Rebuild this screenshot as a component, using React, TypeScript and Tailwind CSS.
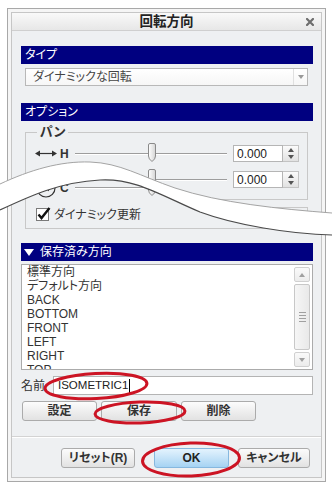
import React from 'react';

const bodyBg = 'bg-[#eef0f2]';

function Header({ children }: { children: React.ReactNode }) {
  return (
    <div className="flex h-[18px] items-center bg-[#000080] pl-[4px] text-[12px] leading-none text-white">
      {children}
    </div>
  );
}

function SpinInput() {
  return (
    <div className="flex h-[17px]">
      <div className="flex w-[50px] items-center border border-[#b5b5b5] bg-white pl-[3px] text-[12px] leading-none text-[#222]">
        0.000
      </div>
      <div className="flex w-[16px] flex-col border border-l-0 border-[#c3c3c3] bg-gradient-to-b from-[#fbfbfb] to-[#e2e2e2]">
        <div className="flex flex-1 items-center justify-center">
          <svg width="6" height="4" viewBox="0 0 6 4">
            <path d="M0 4 L3 0 L6 4 Z" fill="#555" />
          </svg>
        </div>
        <div className="flex flex-1 items-center justify-center">
          <svg width="6" height="4" viewBox="0 0 6 4">
            <path d="M0 0 L6 0 L3 4 Z" fill="#555" />
          </svg>
        </div>
      </div>
    </div>
  );
}

function Slider() {
  return (
    <div className="relative flex h-[17px] w-[152px] items-center">
      <div className="h-[2px] w-full border-t border-[#9d9d9d] bg-white" />
      <svg className="absolute left-[72px] top-[-2px]" width="10" height="19" viewBox="0 0 10 19">
        <defs>
          <linearGradient id="thumb" x1="0" y1="0" x2="1" y2="0">
            <stop offset="0" stopColor="#ffffff" />
            <stop offset="1" stopColor="#d4d4d4" />
          </linearGradient>
        </defs>
        <path d="M1.5 2 Q1.5 0.5 3 0.5 H7 Q8.5 0.5 8.5 2 V13 Q8.5 16 5 18.5 Q1.5 16 1.5 13 Z" fill="url(#thumb)" stroke="#8a8a8a" />
      </svg>
    </div>
  );
}

function AxisRow({ icon, axis }: { icon: React.ReactNode; axis: string }) {
  return (
    <div className="flex h-[17px] items-center pl-[9px]">
      <div className="flex w-[22px] items-center justify-center">{icon}</div>
      <span className="ml-[3px] w-[12px] text-[12px] font-bold leading-none text-[#333]">{axis}</span>
      <div className="ml-[3px]">
        <Slider />
      </div>
      <div className="ml-[6px]">
        <SpinInput />
      </div>
    </div>
  );
}

const hArrow = (
  <svg width="22" height="9" viewBox="0 0 22 9">
    <path d="M3 4.5 H19" stroke="#333" strokeWidth="1.2" />
    <path d="M0 4.5 L5 1.5 L5 7.5 Z M22 4.5 L17 1.5 L17 7.5 Z" fill="#333" />
  </svg>
);

const vArrow = (
  <svg width="9" height="17" viewBox="0 0 9 17">
    <path d="M4.5 3 V14" stroke="#333" strokeWidth="1.2" />
    <path d="M4.5 0 L1.5 4 L7.5 4 Z M4.5 17 L1.5 13 L7.5 13 Z" fill="#333" />
  </svg>
);

const circleIcon = (
  <svg width="22" height="22" viewBox="0 0 22 22">
    <ellipse cx="11" cy="11" rx="9" ry="9" fill="none" stroke="#333" strokeWidth="1.2" />
    <path d="M8 9 L14 14 M14 9 L8 14" stroke="#333" strokeWidth="1" />
  </svg>
);

function Btn({ label, w, blue }: { label: string; w: string; blue?: boolean }) {
  return (
    <div
      className={
        blue
          ? `flex h-[20px] items-center justify-center rounded-[3px] border border-[#86b8df] bg-gradient-to-b from-[#e4f3fd] to-[#a6d3f3] text-[12px] font-bold text-[#222] ${w}`
          : `flex h-[20px] items-center justify-center rounded-[3px] border border-[#ababab] bg-gradient-to-b from-[#fcfcfc] to-[#e2e2e2] text-[12px] font-bold text-[#333] ${w}`
      }
    >
      {label}
    </div>
  );
}

const items = ['標準方向', 'デフォルト方向', 'BACK', 'BOTTOM', 'FRONT', 'LEFT', 'RIGHT', 'TOP'];

export default function App() {
  return (
    <div className="relative h-[487px] w-[332px] overflow-hidden bg-white font-['Liberation_Sans','Noto_Sans_CJK_JP',sans-serif] text-[12px] text-[#333] [font-feature-settings:'palt']">
      <div className="ml-[7px] mt-[8px] w-[319px] border border-[#a8a8a8] bg-[#f5f5f5] p-[3px]">
        <div className={`border border-[#c6c6c6] ${bodyBg}`}>
          {/* Title bar */}
          <div className="grid h-[18px] grid-cols-[1fr_auto_1fr] items-center border-b border-[#cfcfcf] bg-gradient-to-b from-[#f9f9f9] to-[#e7e7e7]">
            <span />
            <span className="text-[13.5px] font-bold leading-none text-[#222]">回転方向</span>
            <svg className="mr-[7px] justify-self-end" width="8" height="8" viewBox="0 0 8 8">
              <path d="M1 1 L7 7 M7 1 L1 7" stroke="#6e6e6e" strokeWidth="2.2" strokeLinecap="square" />
            </svg>
          </div>

          {/* Body */}
          <div className="pb-[9px] pl-[9px] pr-[8px] pt-[15px]">
            <Header>タイプ</Header>
            <div className="ml-[4px] mr-[5px] mt-[4px] flex h-[18px] items-center border border-[#b8b8b8] bg-gradient-to-b from-white to-[#f6f6f6]">
              <span className="flex-1 pl-[7px] text-[12px] leading-none text-[#444]">ダイナミックな回転</span>
              <div className="flex h-full w-[14px] items-center justify-center border-l border-[#e0e0e0]">
                <svg width="6" height="4" viewBox="0 0 6 4">
                  <path d="M0 0 L6 0 L3 4 Z" fill="#999" />
                </svg>
              </div>
            </div>

            <div className="mt-[17px]">
              <Header>オプション</Header>
            </div>

            {/* Options: upper piece */}
            <div className="h-[93px] overflow-hidden">
              <div className="relative ml-[4px] mr-[5px] mt-[11px] h-[68px] border border-[#c8c8c8]">
                <span className={`absolute left-[11px] top-[-9px] px-[3px] text-[13px] font-bold leading-[16px] text-[#333] ${bodyBg}`}>
                  パン
                </span>
                <div className="pt-[12px]">
                  <AxisRow icon={hArrow} axis="H" />
                  <div className="mt-[9px]">
                    <AxisRow icon={vArrow} axis="V" />
                  </div>
                </div>
              </div>
              <div className="relative ml-[4px] mr-[5px] mt-[7px] h-[60px] border border-[#c8c8c8]">
                <span className={`absolute left-[11px] top-[-9px] px-[3px] text-[13px] font-bold leading-[16px] text-[#333] ${bodyBg}`}>
                  回転
                </span>
              </div>
            </div>

            {/* Options: lower piece, below the tear */}
            <div
              className={`-mt-[50px] h-[79px] ${bodyBg} [clip-path:polygon(-25px_34px,0px_24px,24px_14px,51px_8px,74px_6px,99px_9px,129px_19px,159px_31px,189px_41px,229px_50px,269px_56px,311px_59px,311px_90px,-25px_90px)]`}
            >
              <div className="ml-[4px] mr-[5px] h-[65px] border border-t-0 border-[#c8c8c8]">
                <div className="pt-[15px]">
                  <AxisRow icon={circleIcon} axis="C" />
                </div>
                <div className="mt-[11px] flex items-center pl-[10px]">
                  <svg width="16" height="15" viewBox="0 0 16 15">
                    <rect x="0.5" y="1.5" width="12" height="12" fill="white" stroke="#7a7a7a" />
                    <path d="M2.5 7.5 L5.5 11 L13.5 1" fill="none" stroke="#111" strokeWidth="2.4" />
                  </svg>
                  <span className="ml-[2px] text-[12px] leading-none text-[#333]">ダイナミック更新</span>
                </div>
              </div>
            </div>

            {/* Saved orientations */}
            <Header>
              <svg width="10" height="7" viewBox="0 0 10 7" className="ml-[-1px] mr-[6px]">
                <path d="M0 0 L10 0 L5 7 Z" fill="#fff" />
              </svg>
              保存済み方向
            </Header>
            <div className="mt-[3px] flex h-[106px] overflow-hidden border border-[#ababab] bg-white">
              <div className="flex-1 pl-[5px]">
                {items.map((it) => (
                  <div key={it} className="h-[14px] text-[12px] leading-[14px] text-[#333]">
                    {it}
                  </div>
                ))}
              </div>
              <div className="my-[2px] mr-[2px] flex w-[16px] flex-col">
                <div className="flex h-[15px] items-center justify-center rounded-[2px] border border-[#d0d0d0] bg-gradient-to-b from-[#fafafa] to-[#ececec]">
                  <svg width="6" height="4" viewBox="0 0 6 4">
                    <path d="M0 4 L3 0 L6 4 Z" fill="#a0a0a0" />
                  </svg>
                </div>
                <div className="my-[2px] flex flex-1 flex-col items-center justify-center gap-[2px] rounded-[2px] border border-[#c8c8c8] bg-gradient-to-r from-[#f6f6f6] to-[#e9e9e9]">
                  <div className="h-px w-[7px] bg-[#a0a0a0]" />
                  <div className="h-px w-[7px] bg-[#a0a0a0]" />
                  <div className="h-px w-[7px] bg-[#a0a0a0]" />
                  <div className="h-px w-[7px] bg-[#a0a0a0]" />
                </div>
                <div className="flex h-[15px] items-center justify-center rounded-[2px] border border-[#d0d0d0] bg-gradient-to-b from-[#fafafa] to-[#ececec]">
                  <svg width="6" height="4" viewBox="0 0 6 4">
                    <path d="M0 0 L6 0 L3 4 Z" fill="#a0a0a0" />
                  </svg>
                </div>
              </div>
            </div>

            {/* Name */}
            <div className="mt-[6px] flex items-center">
              <span className="w-[32px] text-[12px] leading-none text-[#333]">名前</span>
              <div className="flex h-[19px] flex-1 items-center border border-[#b4b4b4] bg-white pl-[4px] text-[11.5px] leading-none text-[#222]">
                ISOMETRIC1
                <span className="ml-[1px] h-[14px] w-px bg-black" />
              </div>
            </div>

            {/* Save/set/delete */}
            <div className="ml-[1px] mt-[6px] flex gap-[4px]">
              <Btn label="設定" w="w-[75px]" />
              <Btn label="保存" w="w-[76px]" />
              <Btn label="削除" w="w-[75px]" />
            </div>

            <div className="-ml-[9px] -mr-[8px] mt-[15px] h-[2px] border-b border-t border-b-white border-t-[#d3d3d3]" />

            <div className="mt-[10px] flex">
              <div className="ml-[40px]">
                <Btn label="リセット(R)" w="w-[74px]" />
              </div>
              <div className="ml-[19px]">
                <Btn label="OK" w="w-[75px]" blue />
              </div>
              <div className="ml-[9px]">
                <Btn label="キャンセル" w="w-[72px]" />
              </div>
            </div>
          </div>
        </div>
      </div>

      {/* Tear band and red annotation marks */}
      <svg className="pointer-events-none absolute left-0 top-0" width="332" height="487" viewBox="0 0 332 487">
        <path
          d="M0 184 C30 170 60 161 90 162 C120 163 140 176 175 188 C220 203 280 209 332 213 L332 235 C290 234 235 225 200 212 C160 195 135 178 100 180 C60 182 30 196 0 210 Z"
          fill="#fff"
        />
        <path d="M0 184 C30 170 60 161 90 162 C120 163 140 176 175 188 C220 203 280 209 332 213" fill="none" stroke="#a4a4a4" strokeWidth="1" />
        <path d="M0 210 C30 196 60 182 100 180 C135 178 160 195 200 212 C235 225 290 234 332 235" fill="none" stroke="#4a4a4a" strokeWidth="1.2" />

        <ellipse cx="96" cy="386" rx="51" ry="12.5" transform="rotate(-3 96 386)" fill="none" stroke="#cc1424" strokeWidth="3" />
        <ellipse cx="140" cy="412.5" rx="45" ry="10.5" transform="rotate(-2 140 412.5)" fill="none" stroke="#cc1424" strokeWidth="3" />
        <ellipse cx="191" cy="459.5" rx="48.5" ry="16.5" transform="rotate(-2 191 459.5)" fill="none" stroke="#cc1424" strokeWidth="3" />
      </svg>
    </div>
  );
}
